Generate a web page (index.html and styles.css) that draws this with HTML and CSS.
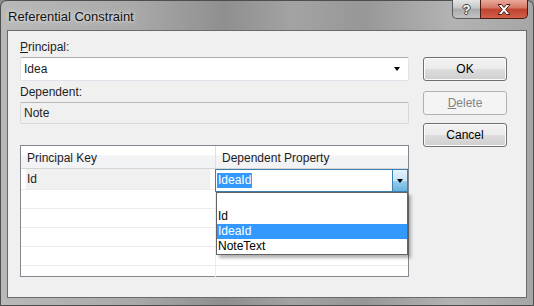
FILE: index.html
```html
<!DOCTYPE html>
<html lang="en">
<head>
  <meta charset="UTF-8">
  <title>Referential Constraint</title>
  <link rel="stylesheet" href="styles.css">
</head>
<body>

  <div class="window">
    <div class="titlebar">
      <span class="title">Referential Constraint</span>
      <div class="caption-buttons">
        <div class="cap-btn help">?</div>
        <div class="cap-btn close">
          <svg width="14" height="11" viewBox="0 0 14 11">
            <path d="M1 0.5 L4.5 0.5 L7 3.5 L9.5 0.5 L13 0.5 L8.8 5.5 L13 10.5 L9.5 10.5 L7 7.5 L4.5 10.5 L1 10.5 L5.2 5.5 Z" fill="#fff" stroke="#4a1a14" stroke-width="1" stroke-linejoin="round"/>
          </svg>
        </div>
      </div>
    </div>

    <div class="client">
      <div class="form">
        <label class="field-label"><u>P</u>rincipal:</label>
        <div class="combo">
          <span>Idea</span>
          <span class="arrow"></span>
        </div>

        <label class="field-label dep">Dependent:</label>
        <div class="textbox disabled">Note</div>

        <div class="grid">
          <div class="grid-row header">
            <div class="cell first">Principal Key</div>
            <div class="cell">Dependent Property</div>
          </div>
          <div class="grid-row current">
            <div class="cell first"><span class="row-mark"></span>Id</div>
            <div class="cell"></div>
          </div>
          <div class="grid-row"><div class="cell first"></div><div class="cell"></div></div>
          <div class="grid-row"><div class="cell first"></div><div class="cell"></div></div>
          <div class="grid-row"><div class="cell first"></div><div class="cell"></div></div>
          <div class="grid-row"><div class="cell first"></div><div class="cell"></div></div>
          <div class="grid-row last"><div class="cell first"></div><div class="cell"></div></div>

          <!-- editing combo + open dropdown sit over the grid -->
          <div class="edit-combo">
            <span class="sel-text">IdeaId</span>
            <span class="drop-btn"><span class="arrow"></span></span>
          </div>
          <ul class="dropdown">
            <li>&nbsp;</li>
            <li>Id</li>
            <li class="selected">IdeaId</li>
            <li>NoteText</li>
          </ul>
        </div>
      </div>

      <div class="buttons">
        <button class="btn ok">OK</button>
        <button class="btn del" disabled><u>D</u>elete</button>
        <button class="btn cancel">Cancel</button>
      </div>
    </div>
  </div>

</body>
</html>
```

FILE: styles.css
```css
body {
  margin: 0;
  font-family: "Liberation Sans", Arial, sans-serif;
  font-size: 12px;
  color: #1e1e1e;
  background: #8c8c8c;
}
.window {
  width: 534px;
  height: 306px;
  box-sizing: border-box;
  display: flex;
  flex-direction: column;
  padding: 0 6px 7px 6px;
  border: 1px solid #4e4e4e;
  border-radius: 7px 7px 0 0;
  background: linear-gradient(90deg, #b9b9b9 0%, #a9a9a9 25%, #8f8f8f 42%, #a3a3a3 55%, #979797 68%, #b3b3b3 85%, #a6a6a6 100%);
}
.titlebar {
  height: 29px;
  display: flex;
  align-items: flex-start;
  justify-content: space-between;
}
.title {
  margin: 8px 0 0 1px;
  font-size: 13px;
  line-height: 15px;
  color: #111;
  text-shadow: 0 0 6px #e6e6e6, 0 0 3px #e6e6e6;
}
.caption-buttons {
  display: flex;
  margin-top: -1px;
  margin-right: -1px;
}
.cap-btn {
  height: 19px;
  box-sizing: border-box;
  border: 1px solid #5a5a5a;
  border-top: none;
  display: flex;
  align-items: center;
  justify-content: center;
}
.help {
  width: 28px;
  border-radius: 0 0 0 5px;
  border-right: none;
  background: linear-gradient(#e4e4e4, #c6c6c6 45%, #a9a9a9 50%, #c3c3c3);
  color: #fff;
  font-weight: bold;
  font-size: 13px;
  text-shadow: 1px 0 0 #3a3a3a, -1px 0 0 #3a3a3a, 0 1px 0 #3a3a3a, 0 -1px 0 #3a3a3a;
}
.close {
  width: 48px;
  border-radius: 0 0 5px 0;
  border-color: #4b1b15;
  background: linear-gradient(#e9a99b, #d47664 45%, #c0432f 50%, #d2604a);
}
.client {
  flex: 1;
  display: flex;
  background: #f0f0f0;
  border: 1px solid #6a6a6a;
  padding: 9px 0 0 12px;
}
.form {
  width: 389px;
  display: flex;
  flex-direction: column;
}
.field-label {
  line-height: 15px;
}
.field-label.dep {
  margin-top: 4px;
}
.combo, .textbox {
  box-sizing: border-box;
  margin-top: 2px;
  padding-left: 3px;
  border: 1px solid #e2e3ea;
  border-top-color: #abadb3;
  border-radius: 2px;
  display: flex;
  align-items: center;
  justify-content: space-between;
}
.combo {
  height: 24px;
  background: #fff;
  padding-right: 8px;
}
.textbox {
  height: 22px;
}
.textbox.disabled {
  background: #f0f0f0;
  border-color: #d9d9d9;
  border-top-color: #b8b8b8;
}
.arrow {
  width: 0;
  height: 0;
  border-left: 3.5px solid transparent;
  border-right: 3.5px solid transparent;
  border-top: 4px solid #000;
}
.grid {
  position: relative;
  margin-top: 21px;
  height: 132px;
  box-sizing: border-box;
  border: 1px solid #828790;
  background: #fff;
  overflow: visible;
}
.grid-row {
  display: flex;
  height: 18px;
  border-bottom: 1px solid #ececec;
}
.grid-row.last {
  height: 11px;
  border-bottom: none;
}
.grid-row.header {
  height: 22px;
  border-bottom: 1px solid #d5d5d5;
  background: linear-gradient(#fff 0%, #fff 40%, #f2f3f5 45%, #f2f3f5 100%);
}
.grid-row.current {
  height: 20px;
}
.cell {
  flex: 1;
  display: flex;
  align-items: center;
  padding-left: 6px;
}
.cell.first {
  flex: none;
  width: 188px;
  border-right: 1px solid #ececec;
}
.header .cell {
  padding-top: 1px;
}
.header .cell.first {
  border-right-color: #e0e0e0;
}
.current .cell.first {
  background: #f0f0f0;
  padding-left: 0;
}
.row-mark {
  width: 5px;
  align-self: stretch;
  background: #fff;
  margin-right: 1px;
}
.edit-combo {
  position: absolute;
  left: 194px;
  top: 23px;
  width: 193px;
  height: 23px;
  box-sizing: border-box;
  border: 1px solid #3c7fb1;
  border-right: none;
  background: #fff;
  display: flex;
  align-items: center;
  justify-content: space-between;
  padding-left: 1px;
}
.sel-text {
  background: #3399ff;
  color: #fff;
  line-height: 15px;
  padding: 0 1px;
}
.drop-btn {
  width: 16px;
  height: 23px;
  box-sizing: border-box;
  border: 1px solid #3c7fb1;
  background: linear-gradient(#e5f4fc, #c4e5f6 50%, #98d1ef 51%, #68b3db);
  display: flex;
  align-items: center;
  justify-content: center;
}
.dropdown {
  position: absolute;
  left: 195px;
  top: 46px;
  width: 192px;
  margin: 0;
  padding: 1px 0 0 0;
  list-style: none;
  box-sizing: border-box;
  border: 1px solid #646464;
  background: #fff;
  box-shadow: 3px 3px 3px rgba(0, 0, 0, 0.3);
}
.dropdown li {
  height: 15px;
  line-height: 15px;
  padding-left: 1px;
  color: #000;
}
.dropdown li.selected {
  background: #3399ff;
  color: #fff;
}
.buttons {
  display: flex;
  flex-direction: column;
  margin-left: 14px;
  padding-top: 17px;
}
.btn {
  width: 84px;
  height: 24px;
  font-family: inherit;
  font-size: 12px;
  color: #000;
  border: 1px solid #707070;
  border-radius: 3px;
  background: linear-gradient(#f2f2f2, #ebebeb 50%, #dddddd 51%, #cfcfcf);
  box-shadow: inset 0 0 0 1px #fcfcfc;
  padding: 0;
}
.btn.del {
  margin-top: 10px;
  color: #838383;
  border-color: #adb2b5;
  background: #f4f4f4;
  box-shadow: none;
}
.btn.cancel {
  margin-top: 8px;
}
```
